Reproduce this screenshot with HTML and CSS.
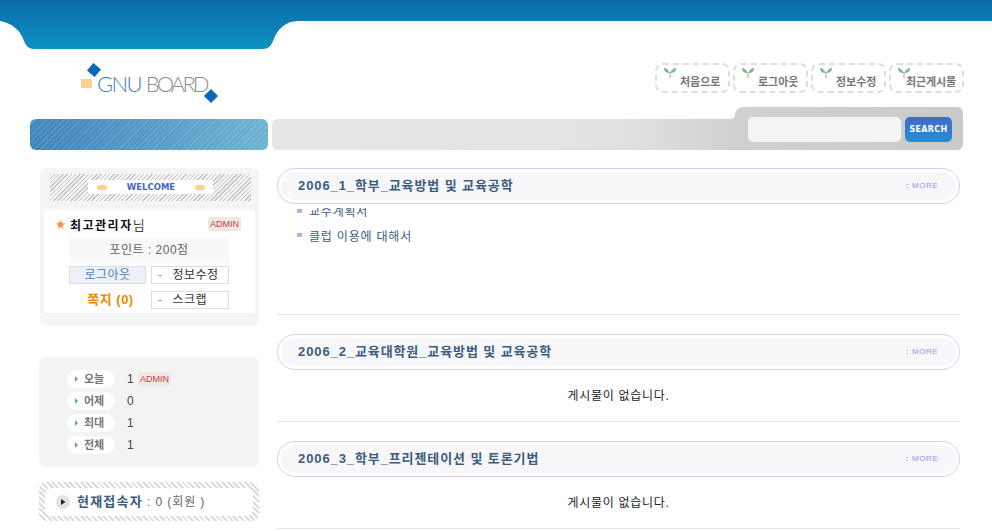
FILE: index.html
```html
<!DOCTYPE html>
<html lang="ko">
<head>
    <meta charset="UTF-8">
    <title>GNU BOARD</title>
    <link rel="stylesheet" href="styles.css">
</head>
<body>
    <svg class="top-band" width="992" height="49" viewBox="0 0 992 49">
        <defs>
            <linearGradient id="bandFill" gradientUnits="userSpaceOnUse" x1="0" y1="0" x2="0" y2="49">
                <stop offset="0" stop-color="#0a6bac"/>
                <stop offset="1" stop-color="#0f91c3"/>
            </linearGradient>
        </defs>
        <path fill="url(#bandFill)" d="M0 0H992V21H298C285 21 277 30 273 41C271 46 268 49 263 49H34C29 49 26 46 24 41C20 30 12 23 0 21Z"/>
    </svg>

    <div class="head-row">
        <svg class="logo" width="140" height="46" viewBox="0 0 140 46">
            <rect x="0" y="16" width="11" height="9" fill="#fbd38d"/>
            <rect x="8" y="2" width="10" height="10" fill="#0a68b8" transform="rotate(40 13 7)"/>
            <rect x="125" y="28" width="10" height="10" fill="#0a68b8" transform="rotate(45 130 33)"/>
            <text x="16" y="29" class="logo-text"><tspan fill="#3c80b8">GNU</tspan><tspan class="logo-board" fill="#8f8f8f" dx="5">BOARD</tspan></text>
        </svg>
        <nav class="top-nav">
            <a class="nav-btn"><svg class="sprout" width="12" height="10" viewBox="0 0 12 10"><path d="M5.5 5C5 2 2 0 0 0C0 3 2 5 5.5 5Z M6.500 5C7 2 10 0 12 0C12 3 10 5 6.500 5Z" fill="#6fbaa2"/><path d="M6 4V10" stroke="#d09a5c"/></svg><span>처음으로</span></a>
            <a class="nav-btn"><svg class="sprout" width="12" height="10" viewBox="0 0 12 10"><path d="M5.5 5C5 2 2 0 0 0C0 3 2 5 5.5 5Z M6.500 5C7 2 10 0 12 0C12 3 10 5 6.500 5Z" fill="#6fbaa2"/><path d="M6 4V10" stroke="#d09a5c"/></svg><span>로그아웃</span></a>
            <a class="nav-btn"><svg class="sprout" width="12" height="10" viewBox="0 0 12 10"><path d="M5.5 5C5 2 2 0 0 0C0 3 2 5 5.5 5Z M6.500 5C7 2 10 0 12 0C12 3 10 5 6.500 5Z" fill="#6fbaa2"/><path d="M6 4V10" stroke="#d09a5c"/></svg><span>정보수정</span></a>
            <a class="nav-btn"><svg class="sprout" width="12" height="10" viewBox="0 0 12 10"><path d="M5.5 5C5 2 2 0 0 0C0 3 2 5 5.5 5Z M6.500 5C7 2 10 0 12 0C12 3 10 5 6.500 5Z" fill="#6fbaa2"/><path d="M6 4V10" stroke="#d09a5c"/></svg><span>최근게시물</span></a>
        </nav>
    </div>

    <div class="search-row">
        <div class="stripe-pane"></div>
        <div class="search-band">
            <div class="search-tab">
                <input class="search-input" type="text">
                <button class="search-btn">SEARCH</button>
            </div>
        </div>
    </div>

    <div class="columns">
        <aside class="side">
            <div class="login-box">
                <div class="welcome">
                    <div class="welcome-label"><i></i><span>WELCOME</span><i></i></div>
                </div>
                <div class="login-inner">
                    <div class="user-line">
                        <svg width="11" height="11" viewBox="0 0 11 11"><path d="M5.5 0L7.2 3.6L11 4.1L8.2 6.800L8.900 10.700L5.5 8.800L2.100 10.700L2.800 6.800L0 4.100L3.800 3.600Z" fill="#fbcf8a"/><circle cx="5.5" cy="5.5" r="2.500" fill="#f08a70"/></svg>
                        <span class="user-name"><b>최고관리자</b>님</span>
                        <span class="badge">ADMIN</span>
                    </div>
                    <div class="points">포인트 : 200점</div>
                    <div class="btn-grid">
                        <a class="mini-btn mini-blue">로그아웃</a>
                        <a class="mini-btn"><em>-</em>정보수정</a>
                        <a class="memo">쪽지 (0)</a>
                        <a class="mini-btn"><em>-</em>스크랩</a>
                    </div>
                </div>
            </div>

            <div class="count-box">
                <div class="count-row"><span class="pill">오늘</span><span class="count-val">1</span><span class="badge">ADMIN</span></div>
                <div class="count-row"><span class="pill">어제</span><span class="count-val">0</span></div>
                <div class="count-row"><span class="pill">최대</span><span class="count-val">1</span></div>
                <div class="count-row"><span class="pill">전체</span><span class="count-val">1</span></div>
            </div>

            <div class="online-box">
                <div class="online-inner">
                    <svg width="14" height="14" viewBox="0 0 14 14"><circle cx="7" cy="7" r="7" fill="#e2e2e2"/><path d="M5 4L9.500 7L5 10Z" fill="#222"/></svg>
                    <span class="online-text"><b>현재접속자</b> : 0 (회원 )</span>
                </div>
            </div>
        </aside>

        <main class="main">
            <section class="board board-first">
                <div class="board-head"><h3>2006_1_학부_교육방법 및 교육공학</h3><a class="more">MORE</a></div>
                <ul class="post-list">
                    <li>교수계획서</li>
                    <li>클럽 이용에 대해서</li>
                </ul>
            </section>
            <section class="board">
                <div class="board-head"><h3>2006_2_교육대학원_교육방법 및 교육공학</h3><a class="more">MORE</a></div>
                <p class="empty">게시물이 없습니다.</p>
            </section>
            <section class="board">
                <div class="board-head"><h3>2006_3_학부_프리젠테이션 및 토론기법</h3><a class="more">MORE</a></div>
                <p class="empty">게시물이 없습니다.</p>
            </section>
        </main>
    </div>
</body>
</html>
```

FILE: styles.css
```css
html {
    overflow: hidden;
}
body {
    margin: 0;
    background: #fff;
    font-family: "Liberation Sans", "Noto Sans CJK KR", sans-serif;
    font-size: 12px;
    color: #333;
}
.top-band {
    display: block;
}

/* logo + top links */
.head-row {
    height: 58px;
    display: flex;
    justify-content: space-between;
    padding: 14px 28px 0 81px;
    box-sizing: border-box;
}
.logo {
    display: block;
}
.logo-text {
    font-family: "Lato", sans-serif;
    font-weight: 300;
    font-size: 22px;
    letter-spacing: -1.7px;
}
.logo-board {
    letter-spacing: -2.9px;
}
.top-nav {
    display: flex;
    gap: 3px;
}
.nav-btn {
    width: 75px;
    height: 30px;
    box-sizing: border-box;
    border: 2px dashed #dedede;
    border-radius: 8px;
    padding: 3px 0 0 7px;
    display: flex;
    color: #777;
    font-weight: bold;
    font-size: 11px;
    white-space: nowrap;
}
.nav-btn span {
    margin: 7px 0 0 4px;
    line-height: 14px;
}
.nav-btn:last-child span {
    margin-left: -4px;
    letter-spacing: -0.1px;
}
.sprout {
    flex: none;
}

/* stripe + search */
.search-row {
    height: 43px;
    padding: 0 29px 0 30px;
    display: flex;
    align-items: flex-end;
    gap: 4px;
}
.stripe-pane {
    width: 238px;
    height: 31px;
    border-radius: 6px;
    background:
        repeating-linear-gradient(135deg, rgba(255,255,255,.14) 0 1px, transparent 1px 4px),
        linear-gradient(90deg, #3f84bb, #6cb2d3);
}
.search-band {
    flex: 1;
    height: 31px;
    border-radius: 6px 0 6px 6px;
    background: linear-gradient(90deg, #e6e6e6 0%, #e2e2e2 50%, #d0d0d0 67%);
    display: flex;
    justify-content: flex-end;
    align-items: flex-end;
}
.search-tab {
    width: 228px;
    height: 43px;
    box-sizing: border-box;
    background: linear-gradient(90deg, #d0d0d0, #cacaca);
    border-radius: 8px 6px 6px 0;
    padding: 10px 11px 0 13px;
    display: flex;
    gap: 4px;
    position: relative;
}
.search-tab::before {
    content: "";
    position: absolute;
    left: -4px;
    top: 8px;
    width: 4px;
    height: 4px;
    background: radial-gradient(circle at 0 0, transparent 3.5px, #d0d0d0 4px);
}
.search-input {
    width: 153px;
    height: 25px;
    box-sizing: border-box;
    border: 0;
    border-radius: 5px;
    background: #f4f4f4;
}
.search-btn {
    width: 47px;
    height: 25px;
    border: 0;
    padding: 0;
    border-radius: 5px;
    background: linear-gradient(#4468c8, #2090dc);
    color: #fff;
    font-family: "DejaVu Sans", sans-serif;
    font-size: 8px;
    font-weight: bold;
    letter-spacing: .3px;
}

.columns {
    display: flex;
    padding: 18px 0 0 39px;
}
.side {
    width: 220px;
    margin-right: 18px;
}
.main {
    width: 683px;
}

/* login box */
.login-box {
    height: 158px;
    margin-left: 1px;
    width: 219px;
    box-sizing: border-box;
    background: #f5f5f5;
    border-radius: 6px;
    padding: 6px 4px 0;
}
.welcome {
    height: 27px;
    margin: 0 4px 0 6px;
    padding-top: 6px;
    box-sizing: border-box;
    background: repeating-linear-gradient(135deg, #c4c4c4 0 1px, #f5f5f5 1px 3px);
}
.welcome-label {
    width: 125px;
    height: 14px;
    margin-left: 38px;
    background: #fff;
    display: flex;
    justify-content: space-between;
    align-items: center;
    padding: 0 8px 0 9px;
    box-sizing: border-box;
}
.welcome-label i {
    width: 10px;
    height: 5px;
    border-radius: 3px;
    background: #fbd38d;
}
.welcome-label span {
    color: #4a66b4;
    font-family: "DejaVu Sans", sans-serif;
    font-size: 8.5px;
    font-weight: bold;
}
.login-inner {
    height: 103px;
    margin-top: 9px;
    background: #fff;
    box-sizing: border-box;
    padding: 6px 14px 0 11px;
}
.user-line {
    height: 16px;
    display: flex;
    align-items: center;
}
.user-name {
    margin-left: 4px;
    font-size: 13px;
    color: #444;
    flex: 1;
}
.user-name b {
    color: #111;
    font-size: 12px;
    letter-spacing: 1.500px;
}
.badge {
    width: 33px;
    height: 14px;
    border-radius: 3px;
    background: #efe8e2;
    color: #c8404c;
    font-size: 9px;
    line-height: 14px;
    text-align: center;
}
.points {
    width: 160px;
    height: 25px;
    margin: 6px 0 0 14px;
    background: #f8f8f8;
    color: #666;
    text-align: center;
    line-height: 25px;
    letter-spacing: .5px;
}
.btn-grid {
    margin: 3px 0 0 14px;
    display: grid;
    grid-template-columns: 77px 78px;
    column-gap: 5px;
    row-gap: 7px;
}
.mini-btn {
    height: 18px;
    box-sizing: border-box;
    border: 1px solid #ddd;
    line-height: 16px;
    padding-left: 6px;
    color: #333;
    letter-spacing: .5px;
}
.mini-btn em {
    font-style: normal;
    color: #999;
    margin-right: 10px;
}
.mini-blue {
    background: #eef0f7;
    color: #4a82b4;
    padding-left: 0;
    text-align: center;
}
.memo {
    color: #f08800;
    font-weight: bold;
    font-size: 13px;
    text-align: center;
    line-height: 18px;
    letter-spacing: .5px;
    padding-left: 6px;
}

/* counter */
.count-box {
    height: 110px;
    margin-top: 31px;
    background: #f3f3f3;
    border-radius: 7px;
    box-sizing: border-box;
    padding: 13px 0 0 28px;
    color: #444;
}
.count-row {
    height: 18px;
    margin-bottom: 4px;
    display: flex;
    align-items: center;
}
.pill {
    width: 48px;
    height: 18px;
    box-sizing: border-box;
    background: #fff;
    border-radius: 9px;
    padding-left: 17px;
    line-height: 18px;
    font-size: 11px;
    font-weight: bold;
    color: #777;
    position: relative;
}
.pill::before {
    content: "";
    position: absolute;
    left: 8px;
    top: 6px;
    border-left: 3px solid #5fa8a8;
    border-top: 3px solid transparent;
    border-bottom: 3px solid transparent;
}
.count-val {
    margin-left: 12px;
    width: 11px;
}

/* online */
.online-box {
    height: 39px;
    margin-top: 15px;
    box-sizing: border-box;
    padding: 6px 6px 5px;
    border-radius: 7px;
    background: repeating-linear-gradient(45deg, #dcdcdc 0 2px, #fff 2px 4px);
}
.online-inner {
    height: 28px;
    background: #fff;
    border-radius: 6px;
    display: flex;
    align-items: center;
    padding-left: 11px;
    gap: 7px;
    color: #666;
    letter-spacing: .9px;
}
.online-text {
    margin-top: -3px;
}
.online-text b {
    color: #3c5c7c;
    font-size: 13px;
    letter-spacing: 1.200px;
}

/* boards */
.board {
    border-bottom: 1px solid #e6e6e6;
    height: 87px;
    margin-bottom: 19px;
}
.board-first {
    height: 146px;
}
.board-head {
    height: 36px;
    box-sizing: border-box;
    border: 1px solid #d4d0f4;
    border-radius: 18px;
    background: #fff;
    position: relative;
    display: flex;
    align-items: center;
    justify-content: space-between;
}
.board-head::before {
    content: "";
    position: absolute;
    inset: 3px 3px;
    background: #f7f7fa;
    border-radius: 15px;
}
.board-head h3 {
    margin: 0 0 4px 20px;
    font-size: 13px;
    font-weight: bold;
    color: #3e5c7e;
    letter-spacing: .9px;
    position: relative;
}
.more {
    margin: 0 21px 2px 0;
    font-size: 8px;
    color: #a090e0;
    letter-spacing: .5px;
    position: relative;
}
.more::before {
    content: ":";
    font-weight: bold;
    margin-right: 3px;
}
.post-list {
    list-style: none;
    margin: 4px 0 0;
    padding: 0 0 0 20px;
    color: #3e5c7e;
}
.post-list li {
    height: 24px;
    line-height: 26px;
    padding-left: 12px;
    position: relative;
    letter-spacing: .8px;
}
/* first title is cut off by the heading in the original */
.post-list li:first-child {
    height: 16px;
    line-height: 8px;
    overflow: hidden;
}
.post-list li::before {
    content: "";
    position: absolute;
    left: 0;
    top: 9px;
    width: 5px;
    height: 4px;
    background: #a8b8e0;
}
.post-list li:first-child::before {
    top: 1px;
}
.empty {
    margin: 0;
    height: 50px;
    line-height: 52px;
    text-align: center;
    color: #222;
    letter-spacing: .7px;
}
```
